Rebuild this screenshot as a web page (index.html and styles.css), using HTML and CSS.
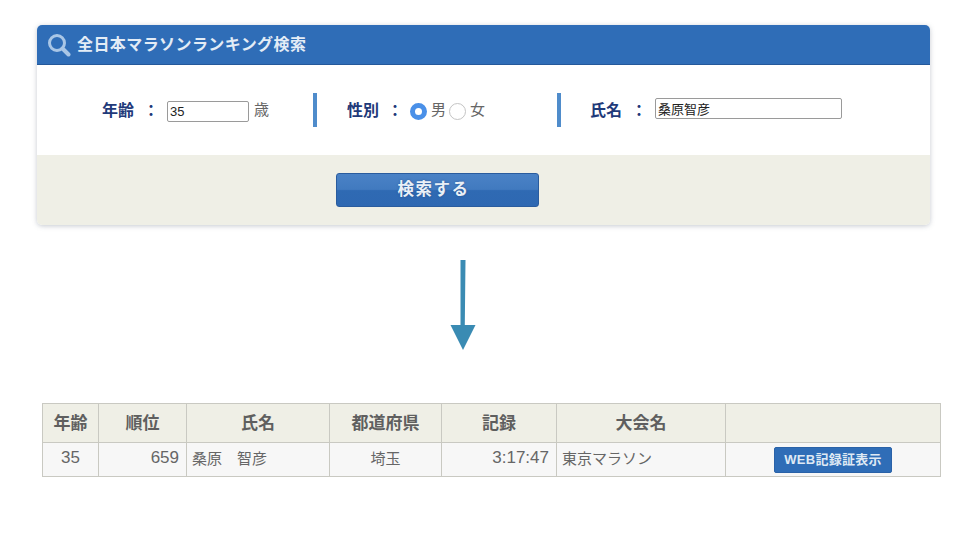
FILE: index.html
```html
<!DOCTYPE html>
<html lang="ja">
<head>
<meta charset="utf-8">
<title>全日本マラソンランキング検索</title>
<link rel="stylesheet" href="styles.css">
</head>
<body>
<section class="card">
  <header class="card-head">
    <svg class="search-icon" width="24" height="24" viewBox="0 0 24 24" aria-hidden="true">
      <circle cx="10" cy="10" r="7.5" fill="none" stroke="#a9c6e6" stroke-width="3"/>
      <path d="M15.5 15.5 L21.5 21.5" stroke="#a9c6e6" stroke-width="4" stroke-linecap="round"/>
    </svg>
    <h1 class="card-title">全日本マラソンランキング検索</h1>
  </header>
  <div class="fields">
    <div class="field field-age">
      <span class="label">年齢</span><span class="colon">：</span>
      <input class="box box-age" type="text" value="35">
      <span class="unit">歳</span>
    </div>
    <div class="field field-sex">
      <span class="label">性別</span><span class="colon">：</span>
      <span class="radio radio-on"></span><span class="unit">男</span>
      <span class="radio"></span><span class="unit">女</span>
    </div>
    <div class="field field-name">
      <span class="label">氏名</span><span class="colon">：</span>
      <input class="box box-name" type="text" value="桑原智彦">
    </div>
  </div>
  <div class="actions">
    <button class="search-btn" type="button">検索する</button>
  </div>
</section>

<div class="arrow-wrap">
  <svg width="28" height="91" viewBox="0 0 28 91" aria-hidden="true">
    <path d="M11.5 0 H16.5 L15.8 65 H26.5 L14 90 L1.5 65 H11.5 Z" fill="#3a8bb3"/>
  </svg>
</div>

<table class="result">
  <thead>
    <tr>
      <th class="c1">年齢</th><th class="c2">順位</th><th class="c3">氏名</th><th class="c4">都道府県</th><th class="c5">記録</th><th class="c6">大会名</th><th class="c7"></th>
    </tr>
  </thead>
  <tbody>
    <tr>
      <td class="center num">35</td>
      <td class="right num">659</td>
      <td>桑原　智彦</td>
      <td class="center">埼玉</td>
      <td class="right num">3:17:47</td>
      <td>東京マラソン</td>
      <td class="center btn-cell"><button class="web-btn" type="button">WEB記録証表示</button></td>
    </tr>
  </tbody>
</table>
</body>
</html>
```
FILE: styles.css
```css
* { box-sizing: border-box; }
html, body { margin: 0; padding: 0; background: #fff; }
body {
  width: 960px;
  height: 540px;
  overflow: hidden;
  padding-top: 25px;
  font-family: "Noto Sans CJK JP", "Liberation Sans", sans-serif;
  color: #555;
}
.card {
  width: 893px;
  height: 200px;
  margin-left: 37px;
  border-radius: 5px;
  box-shadow: 0 1px 5px rgba(90, 100, 120, .35);
  overflow: hidden;
  display: flex;
  flex-direction: column;
}
.card-head {
  height: 40px;
  flex: none;
  background: #2f6db7;
  border-bottom: 1px solid #24589a;
  display: flex;
  align-items: center;
  padding-left: 10px;
  gap: 6px;
}
.search-icon { flex: none; }
.card-title {
  margin: 0;
  padding-bottom: 3px;
  font-size: 16px;
  font-weight: 700;
  color: #e3ecf6;
  letter-spacing: .026em;
  line-height: 20px;
  white-space: nowrap;
}
.fields {
  height: 90px;
  flex: none;
  background: #fff;
  display: flex;
  align-items: flex-start;
  padding-top: 28px;
}
.field {
  height: 34px;
  display: flex;
  align-items: center;
}
.field-age { width: 276px; padding-left: 65px; }
.field-sex {
  width: 244px;
  padding-left: 30px;
  border-left: 4px solid #4f8ccb;
}
.field-name {
  padding-left: 29px;
  border-left: 4px solid #4f8ccb;
}
.label, .colon {
  font-size: 16px;
  font-weight: 700;
  color: #1f3a7a;
  line-height: 20px;
  padding-bottom: 2px;
  white-space: nowrap;
}
.label { width: 33px; }
.colon { width: 32px; text-align: center; }
.field-sex .colon { width: 30px; }
.field-name .colon { width: 32px; }
.box {
  font-family: "Liberation Sans", "Noto Sans CJK JP", sans-serif;
  color: #222;
  background: #fff;
  border: 1px solid #9a9a9a;
  border-radius: 2px;
  padding: 1px 2px;
  outline: none;
}
.box-age {
  width: 82px;
  height: 21px;
  margin-top: 2px;
  margin-right: 5px;
  font-size: 13px;
}
.box-name {
  width: 187px;
  height: 21px;
  margin-top: -4px;
  padding-left: 2px;
  font-size: 13px;
}
.unit { font-size: 15px; color: #666; line-height: 20px; padding-bottom: 3px; }
.radio {
  width: 17px;
  height: 17px;
  border-radius: 50%;
  border: 1px solid #c4c4c4;
  background: #fff;
  margin-right: 4px;
  margin-left: 3px;
  flex: none;
  margin-top: 3px;
}
.radio-on {
  margin-left: 0;
  border: 5px solid #4a90e8;
}
.actions {
  flex: 1;
  background: #efefe6;
  padding: 18px 0 0 299px;
}
.search-btn {
  display: block;
  width: 203px;
  height: 34px;
  border: 1px solid #2a5c9e;
  border-radius: 3px;
  background: linear-gradient(#4a82c6 0%, #417abf 48%, #2f6ab3 52%, #2e68b2 100%);
  color: #e9f0f7;
  font-family: inherit;
  font-size: 16.5px;
  font-weight: 700;
  letter-spacing: .09em;
  padding: 0 8px 4px 0;
  text-shadow: 0 0 2px rgba(20, 50, 100, .5);
}
.arrow-wrap {
  height: 178px;
  padding-top: 35px;
  padding-left: 449px;
}
.arrow-wrap svg { display: block; }
.result {
  margin-left: 42px;
  width: 899px;
  table-layout: fixed;
  border-collapse: collapse;
  border: 1px solid #c9c9c2;
}
.result th, .result td {
  border: 1px solid #c9c9c2;
  padding: 0 7px 0 5px;
}
.result th {
  height: 39px;
  padding: 0 6px 4px;
  background: #efefe6;
  font-size: 17px;
  font-weight: 700;
  color: #5f5f5f;
  text-align: center;
}
.result td {
  height: 34px;
  padding-bottom: 5px;
  background: #f7f7f7;
  color: #666;
  font-family: "Liberation Sans", "Noto Sans CJK JP", sans-serif;
  font-size: 15px;
}
.result .num { font-size: 17px; padding-bottom: 3px; }
.result .center { padding-left: 6px; padding-right: 6px; }
.result .btn-cell { padding: 3px 0 3px 0; }
.c1 { width: 56px; }
.c2 { width: 88px; }
.c3 { width: 143px; }
.c4 { width: 112px; }
.c5 { width: 115px; }
.c6 { width: 169px; }
.center { text-align: center; }
.right { text-align: right; }
.web-btn {
  display: block;
  width: 118px;
  height: 26px;
  margin: 0 auto;
  border: 1px solid #2a62a8;
  border-radius: 2px;
  background: #2f6db7;
  color: #dfe9f4;
  font-family: "Liberation Sans", "Noto Sans CJK JP", sans-serif;
  font-size: 13px;
  font-weight: 700;
  letter-spacing: .02em;
  padding: 0 0 2px;
}
```
